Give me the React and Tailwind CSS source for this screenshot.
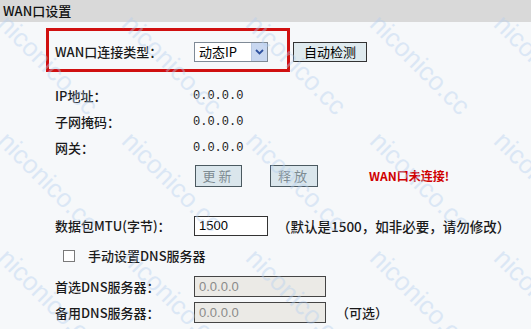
import React from 'react';

const cjk = { fontFamily: '"Noto Sans CJK SC", "Liberation Sans", sans-serif' };
const arial = { fontFamily: '"Liberation Sans", Arial, sans-serif' };

const Label = ({ children }) => (
  <div className="w-[139px] shrink-0 text-[13px] font-medium text-[#1a1a1a]">{children}</div>
);

const Row = ({ h = 'h-[26px]', children, className = '' }) => (
  <div className={`flex items-center pl-[55px] ${h} ${className}`}>{children}</div>
);

const Watermarks = () => {
  const marks = [];
  for (let r = 0; r < 3; r++) {
    for (let c = 0; c < 5; c++) {
      marks.push({ x: 12 + c * 124, y: 10 + r * 117 });
    }
  }
  return (
    <div className="pointer-events-none absolute inset-0 overflow-hidden">
      {marks.map((m, i) => (
        <div
          key={i}
          className="absolute origin-top-left rotate-45 whitespace-nowrap text-[26px] leading-none text-[#b4cff0] opacity-40"
          style={{ left: m.x, top: m.y, ...arial }}
        >
          niconico.cc
        </div>
      ))}
    </div>
  );
};

const GrayButton = ({ children, className = '' }) => (
  <button
    className={`flex h-[22px] items-center justify-center border border-[#4b5960] bg-[#dae6ec] text-[13px] tracking-[3px] text-[#7d8b92] ${className}`}
  >
    {children}
  </button>
);

export default function App() {
  return (
    <div className="relative h-[329px] w-[531px] overflow-hidden bg-[#f6f8fa]" style={cjk}>
      <div className="h-[22px] bg-[#d9d9d9] pl-[3px] text-[13px] font-medium leading-[22px] text-[#111]">
        WAN口设置
      </div>

      <div className="mt-[6px] flex items-center">
        <div className="ml-[46px] flex h-[44px] w-[244px] items-center border-[3px] border-[#d01010] pl-[6px] pt-[4px]">
          <Label>WAN口连接类型：</Label>
          <div className="flex h-[20px] w-[74px] items-stretch border border-[#7f8a96] bg-white">
            <span className="flex-1 pl-[4px] text-[13px] leading-[18px] text-black">动态IP</span>
            <span className="flex w-[16px] items-center justify-center border-l border-[#b8c8e0] bg-[#c8d7f0]">
              <svg width="9" height="6" viewBox="0 0 9 6">
                <path d="M1 1 L4.5 4.5 L8 1" fill="none" stroke="#2f52a0" strokeWidth="1.8" />
              </svg>
            </span>
          </div>
        </div>
        <button className="ml-[3px] mt-[4px] h-[20px] w-[74px] border border-[#333] bg-[#dfeaee] text-[13px] leading-[18px] text-black">
          自动检测
        </button>
      </div>

      <div className="mt-[11px]">
        {[
          ['IP地址：', '0.0.0.0'],
          ['子网掩码：', '0.0.0.0'],
          ['网关：', '0.0.0.0'],
        ].map(([k, v]) => (
          <Row key={k}>
            <Label>{k}</Label>
            <span
              className="-ml-[1px] text-[12px] text-[#222]"
              style={{ fontFamily: '"Liberation Mono", monospace' }}
            >
              {v}
            </span>
          </Row>
        ))}
      </div>

      <Row h="h-[24px]" className="mt-[3px]">
        <div className="w-[140px] shrink-0" />
        <GrayButton className="w-[47px]">更新</GrayButton>
        <GrayButton className="ml-[28px] w-[48px]">释放</GrayButton>
        <span className="ml-[51px] text-[12px] font-bold text-[#d00000]">WAN口未连接!</span>
      </Row>

      <Row className="mt-[25px]">
        <Label>数据包MTU(字节)：</Label>
        <div
          className="flex h-[20px] w-[74px] items-center border border-[#333] bg-white pl-[4px] text-[13px] text-black"
          style={arial}
        >
          1500
        </div>
        <span className="ml-[9px] text-[13.5px] font-medium text-[#1a1a1a]">（默认是1500，如非必要，请勿修改）</span>
      </Row>

      <div className="mt-[5px] flex h-[24px] items-center pl-[63px]">
        <span className="h-[12px] w-[12px] border border-[#7a7a7a] bg-white" />
        <span className="ml-[13px] text-[13px] font-medium text-[#1a1a1a]">手动设置DNS服务器</span>
      </div>

      <Row h="h-[23px]" className="mt-[7px]">
        <Label>首选DNS服务器：</Label>
        <div
          className="flex h-[21px] w-[132px] items-center border border-[#444] bg-[#ebeae6] pl-[4px] text-[13px] text-[#8a8a8a]"
          style={arial}
        >
          0.0.0.0
        </div>
      </Row>

      <Row h="h-[23px]" className="mt-[3px]">
        <Label>备用DNS服务器：</Label>
        <div
          className="flex h-[21px] w-[132px] items-center border border-[#444] bg-[#ebeae6] pl-[4px] text-[13px] text-[#8a8a8a]"
          style={arial}
        >
          0.0.0.0
        </div>
        <span className="ml-[10px] text-[13px] font-medium text-[#1a1a1a]">（可选）</span>
      </Row>

      <Watermarks />
    </div>
  );
}
